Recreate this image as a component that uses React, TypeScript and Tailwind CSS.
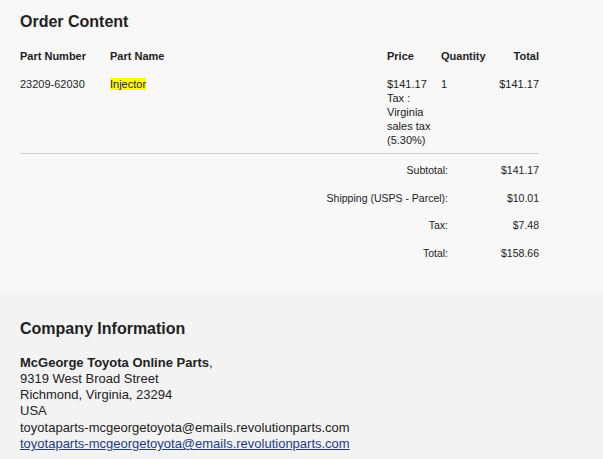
import React from "react";

type Line = { number: string; name: string; price: string[]; qty: string; total: string };

const lines: Line[] = [
  {
    number: "23209-62030",
    name: "Injector",
    price: ["$141.17", "Tax :", "Virginia", "sales tax", "(5.30%)"],
    qty: "1",
    total: "$141.17",
  },
];

const summary = [
  { label: "Subtotal:", value: "$141.17" },
  { label: "Shipping (USPS - Parcel):", value: "$10.01" },
  { label: "Tax:", value: "$7.48" },
  { label: "Total:", value: "$158.66" },
];

const email = "toyotaparts-mcgeorgetoyota@emails.revolutionparts.com";

export default function App() {
  return (
    <div className="w-[603px] h-[459px] overflow-hidden text-[#222] font-['Liberation_Sans',Arial,sans-serif]">
      {/* Order content */}
      <section className="bg-[#f8f8f8] px-5 pt-3 pb-[31px]">
        <h2 className="text-[16px] leading-[19px] font-bold">Order Content</h2>

        <div className="w-[519px] mt-[18px] text-[11px] leading-[14px]">
          <div className="grid grid-cols-[90px_277px_54px_49px_49px] font-bold">
            <div>Part Number</div>
            <div>Part Name</div>
            <div>Price</div>
            <div>Quantity</div>
            <div className="text-right">Total</div>
          </div>

          {lines.map((l) => (
            <div
              key={l.number}
              className="grid grid-cols-[90px_277px_54px_49px_49px] mt-[14px] pb-[6px] border-b border-[#d0d0d0]"
            >
              <div>{l.number}</div>
              <div>
                <span className="bg-[#ffff00]">{l.name}</span>
              </div>
              <div className="flex flex-col">
                {l.price.map((p) => (
                  <span key={p}>{p}</span>
                ))}
              </div>
              <div>{l.qty}</div>
              <div className="text-right">{l.total}</div>
            </div>
          ))}

          <div className="flex flex-col gap-[13.5px] mt-[9px] text-[10.5px]">
            {summary.map((s) => (
              <div key={s.label} className="flex justify-end">
                <span className="text-right">{s.label}</span>
                <span className="w-[91px] text-right">{s.value}</span>
              </div>
            ))}
          </div>
        </div>
      </section>

      {/* Company information */}
      <section className="bg-[#f3f3f3] px-5 pt-[28px] h-[200px]">
        <h2 className="text-[16px] leading-[19px] font-bold">Company Information</h2>
        <div className="mt-[17px] text-[13px] leading-[16.3px]">
          <div>
            <span className="font-bold">McGeorge Toyota Online Parts</span>,
          </div>
          <div>9319 West Broad Street</div>
          <div>Richmond, Virginia, 23294</div>
          <div>USA</div>
          <div>{email}</div>
          <a href="#" className="text-[#1c3b8c] underline">
            {email}
          </a>
        </div>
      </section>
    </div>
  );
}
